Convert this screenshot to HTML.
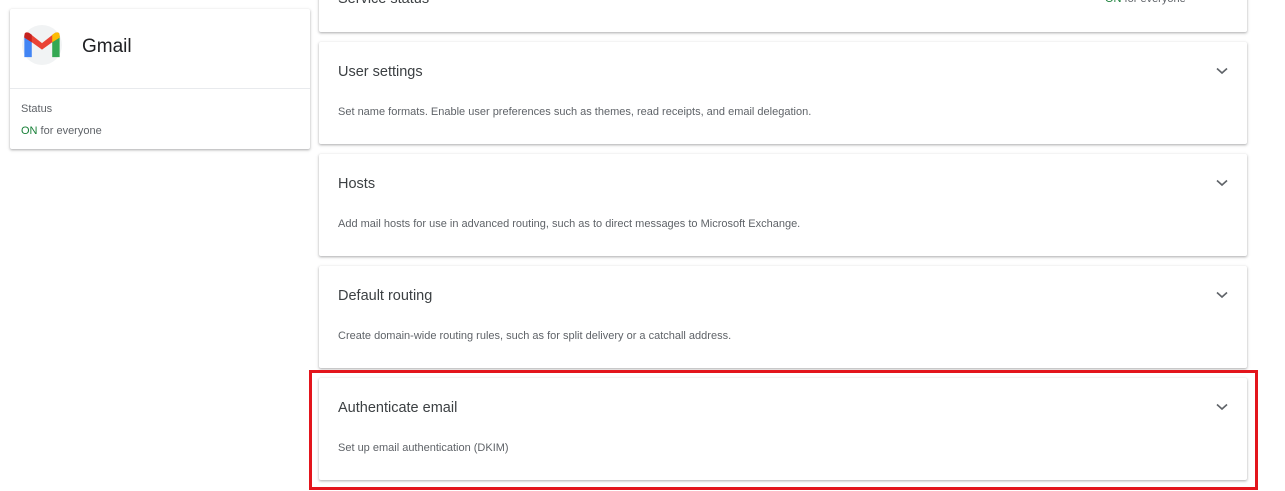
<!DOCTYPE html>
<html><head><style>
*{margin:0;padding:0;box-sizing:border-box}
body{width:1285px;height:491px;background:#fff;font-family:"Liberation Sans",Roboto,sans-serif;position:relative;overflow:hidden;color:#3c4043}
.card{position:absolute;background:#fff;box-shadow:0 1px 2px rgba(60,64,67,.35),0 1px 3px 1px rgba(60,64,67,.08);border-radius:2px}
.row{left:319px;width:928px;height:102px}
.t{position:absolute;left:19px;top:22px;font-size:14.5px;color:#3c4043}
.d{position:absolute;left:19px;top:64px;font-size:11px;color:#5f6368}
.chev{position:absolute;left:897px;top:25px}
</style></head><body>
<div class="card" style="left:10px;top:9px;width:300px;height:140px">
 <div style="position:absolute;left:12px;top:16px;width:40px;height:40px;border-radius:50%;background:#f1f3f4"></div>
 <svg style="position:absolute;left:14px;top:23px" width="36" height="26" viewBox="0 0 38 28">
  <path d="M0 4 L0 27 L8 27 L8 10 Z" fill="#4285f4"/>
  <path d="M30 10 L30 27 L38 27 L38 4 Z" fill="#34a853"/>
  <path d="M0 4 Q0 -1 5 1 L19 12 L33 1 Q38 -1 38 4 L38 6 L30 11 L19 19 L8 11 L0 6Z" fill="#ea4335"/>
  <path d="M0 4 Q0 -1 5 1 L8 3 L8 11 L0 6Z" fill="#c5221f"/>
  <path d="M30 3 L33 1 Q38 -1 38 4 L38 6 L30 11Z" fill="#fbbc04"/>
 </svg>
 <div style="position:absolute;left:72px;top:27px;font-size:19px;color:#202124">Gmail</div>
 <div style="position:absolute;left:0;top:79px;width:300px;border-top:1px solid #e8eaed"></div>
 <div style="position:absolute;left:11px;top:94px;font-size:11px;color:#5f6368">Status</div>
 <div style="position:absolute;left:11px;top:116px;font-size:11px;color:#5f6368"><span style="color:#188038">ON</span> for everyone</div>
</div>

<div class="card" style="left:319px;top:-70px;width:928px;height:102px">
 <div style="position:absolute;left:19px;top:61px;font-size:14.5px">Service status</div>
 <div style="position:absolute;left:786px;top:63px;font-size:11px;color:#5f6368"><span style="color:#188038">ON</span> for everyone</div>
</div>

<div class="card row" style="top:42px"><div class="t">User settings</div><div class="d">Set name formats. Enable user preferences such as themes, read receipts, and email delegation.</div><svg class="chev" width="12" height="8" viewBox="0 0 12 8"><path d="M1 1.5 L6 6 L11 1.5" fill="none" stroke="#5f6368" stroke-width="1.6"/></svg></div>
<div class="card row" style="top:154px"><div class="t">Hosts</div><div class="d">Add mail hosts for use in advanced routing, such as to direct messages to Microsoft Exchange.</div><svg class="chev" width="12" height="8" viewBox="0 0 12 8"><path d="M1 1.5 L6 6 L11 1.5" fill="none" stroke="#5f6368" stroke-width="1.6"/></svg></div>
<div class="card row" style="top:266px"><div class="t">Default routing</div><div class="d">Create domain-wide routing rules, such as for split delivery or a catchall address.</div><svg class="chev" width="12" height="8" viewBox="0 0 12 8"><path d="M1 1.5 L6 6 L11 1.5" fill="none" stroke="#5f6368" stroke-width="1.6"/></svg></div>
<div class="card row" style="top:378px"><div class="t">Authenticate email</div><div class="d">Set up email authentication (DKIM)</div><svg class="chev" width="12" height="8" viewBox="0 0 12 8"><path d="M1 1.5 L6 6 L11 1.5" fill="none" stroke="#5f6368" stroke-width="1.6"/></svg></div>

<div style="position:absolute;left:309px;top:370px;width:949px;height:120px;border:3px solid #e3151c"></div>
</body></html>
